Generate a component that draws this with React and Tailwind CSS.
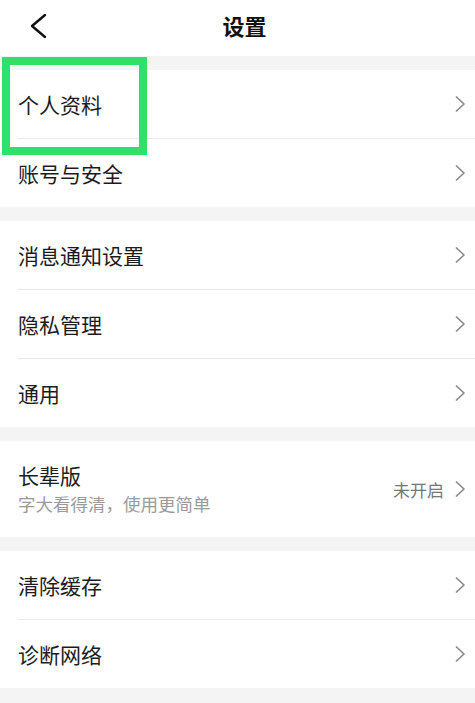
import React from 'react'

const font = { fontFamily: '"Noto Sans CJK SC", "Noto Sans", sans-serif' }

function Chevron() {
  return (
    <svg width="13" height="18" viewBox="0 0 13 18" fill="none" className="shrink-0">
      <path d="M2.5 2 L10 9 L2.5 16" stroke="#8a8a8a" strokeWidth="1.7" strokeLinecap="round" strokeLinejoin="round" />
    </svg>
  )
}

function Row({ label, last }) {
  return (
    <>
      <div className="h-[68px] flex items-center justify-between pl-[18px] pr-[8px]">
        <span className="text-[21px] text-[#1c1c1c] leading-none">{label}</span>
        <Chevron />
      </div>
      {!last && <div className="h-px bg-[#e9e9e9] ml-[18px]" />}
    </>
  )
}

function Section({ items }) {
  return (
    <div className="bg-white">
      {items.map((t, i) => (
        <Row key={t} label={t} last={i === items.length - 1} />
      ))}
    </div>
  )
}

export default function App() {
  return (
    <div className="relative w-[475px] h-[703px] bg-[#f4f4f4] overflow-hidden" style={font}>
      {/* header */}
      <div className="relative h-[56px] bg-white flex items-center justify-center pl-[14px] pb-[6px]">
        <svg width="20" height="26" viewBox="0 0 20 26" fill="none" className="absolute left-[28px] top-[13px]">
          <path d="M17 2 L4 13 L17 24" stroke="#111" strokeWidth="2.4" strokeLinecap="round" strokeLinejoin="round" />
        </svg>
        <span className="text-[22px] font-bold text-[#111] leading-none">设置</span>
      </div>

      <div className="flex flex-col gap-[14px] pt-[14px]">
        <Section items={['个人资料', '账号与安全']} />
        <Section items={['消息通知设置', '隐私管理', '通用']} />

        <div className="bg-white h-[96px] flex items-center justify-between pl-[18px] pr-[8px]">
          <div className="flex flex-col gap-[9px]">
            <span className="text-[21px] text-[#1c1c1c] leading-none">长辈版</span>
            <span className="text-[17.5px] text-[#9a9a9a] leading-none">字大看得清，使用更简单</span>
          </div>
          <div className="flex items-center gap-[10px]">
            <span className="text-[17px] text-[#777] leading-none">未开启</span>
            <Chevron />
          </div>
        </div>

        <Section items={['清除缓存', '诊断网络']} />
      </div>

      {/* highlight annotation */}
      <div className="absolute left-[2px] top-[57px] w-[145px] h-[98px] border-[8px] border-[#2fe06b]" />
    </div>
  )
}
